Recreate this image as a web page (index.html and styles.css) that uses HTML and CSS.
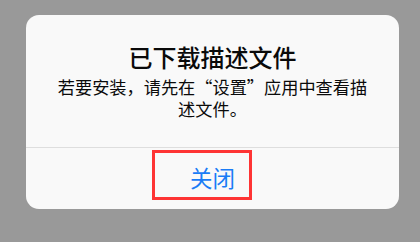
FILE: index.html
```html
<!DOCTYPE html>
<html lang="zh-CN">
<head>
<meta charset="utf-8">
<link rel="stylesheet" href="styles.css">
</head>
<body>
<div class="alert">
  <div class="alert-body">
    <div class="alert-title">已下载描述文件</div>
    <div class="alert-message">若要安装，请先在“设置”应用中查看描述文件。</div>
  </div>
  <div class="alert-actions">
    <div class="alert-button">关闭<span class="highlight"></span></div>
  </div>
</div>
</body>
</html>
```

FILE: styles.css
```css
html, body {
  margin: 0;
  padding: 0;
}
body {
  background: #999999;
  width: 420px;
  height: 242px;
  overflow: hidden;
  font-family: "Noto Sans CJK SC", "Noto Sans", sans-serif;
}
.alert {
  margin: 15px 0 0 26px;
  width: 373px;
  height: 194px;
  background: #f9f9f9;
  border-radius: 13px;
  display: flex;
  flex-direction: column;
}
.alert-body {
  height: 133px;
  box-sizing: border-box;
  padding: 28px 26px 0;
  border-bottom: 1px solid #dedede;
  text-align: center;
  color: #0a0a0a;
}
.alert-title {
  font-size: 24px;
  line-height: 28px;
  font-weight: 500;
}
.alert-message {
  margin-top: 5px;
  font-size: 17.2px;
  line-height: 22px;
}
.alert-actions {
  flex: 1;
  display: flex;
  justify-content: center;
  align-items: center;
  padding-bottom: 4px;
}
.alert-button {
  position: relative;
  color: #1a7cf6;
  font-size: 22.5px;
  line-height: 28px;
}
.highlight {
  position: absolute;
  left: -38px;
  top: -13px;
  width: 94px;
  height: 44px;
  border: 3px solid #fe3434;
}
```
